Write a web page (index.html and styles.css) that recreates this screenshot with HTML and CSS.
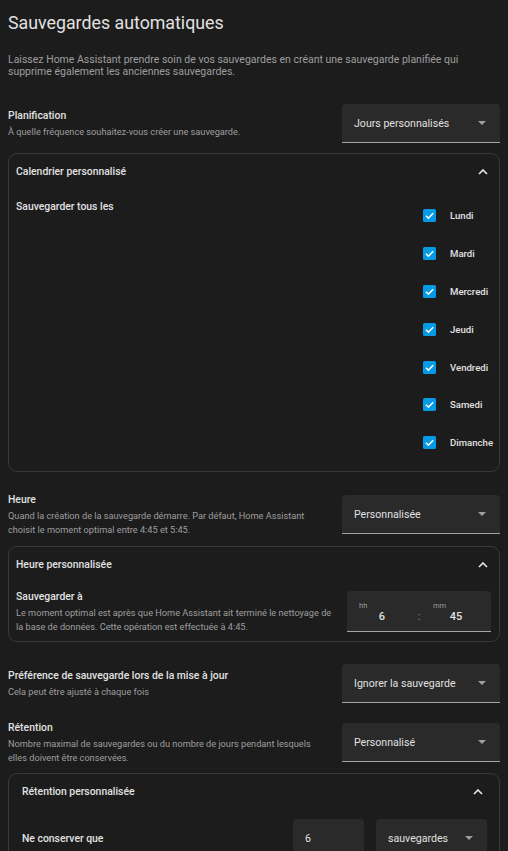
FILE: index.html
```html
<!DOCTYPE html>
<html lang="fr">
<head>
<meta charset="utf-8">
<title>Sauvegardes automatiques</title>
<link rel="stylesheet" href="styles.css">
</head>
<body>
<main class="page">
  <h1 class="title">Sauvegardes automatiques</h1>
  <p class="intro">Laissez Home Assistant prendre soin de vos sauvegardes en créant une sauvegarde planifiée qui supprime également les anciennes sauvegardes.</p>

  <div class="row row-plan">
    <div class="row-text">
      <div class="row-label">Planification</div>
      <div class="row-sub">À quelle fréquence souhaitez-vous créer une sauvegarde.</div>
    </div>
    <div class="select"><span class="select-value">Jours personnalisés</span><svg class="arrow" viewBox="0 0 8 4" width="8" height="4"><polygon points="0,0 8,0 4,4"/></svg></div>
  </div>

  <section class="card card-days">
    <header class="card-head"><span>Calendrier personnalisé</span><svg class="chevron" viewBox="0 0 10 6" width="10" height="6"><path d="M1 5 L5 1 L9 5"/></svg></header>
    <div class="days-body">
      <div class="days-label">Sauvegarder tous les</div>
      <ul class="days">
        <li class="day"><span class="check"><svg viewBox="0 0 13 13" width="13" height="13"><path d="M3 6.8 L5.4 9.2 L10.2 4.2"/></svg></span>Lundi</li>
        <li class="day"><span class="check"><svg viewBox="0 0 13 13" width="13" height="13"><path d="M3 6.8 L5.4 9.2 L10.2 4.2"/></svg></span>Mardi</li>
        <li class="day"><span class="check"><svg viewBox="0 0 13 13" width="13" height="13"><path d="M3 6.8 L5.4 9.2 L10.2 4.2"/></svg></span>Mercredi</li>
        <li class="day"><span class="check"><svg viewBox="0 0 13 13" width="13" height="13"><path d="M3 6.8 L5.4 9.2 L10.2 4.2"/></svg></span>Jeudi</li>
        <li class="day"><span class="check"><svg viewBox="0 0 13 13" width="13" height="13"><path d="M3 6.8 L5.4 9.2 L10.2 4.2"/></svg></span>Vendredi</li>
        <li class="day"><span class="check"><svg viewBox="0 0 13 13" width="13" height="13"><path d="M3 6.8 L5.4 9.2 L10.2 4.2"/></svg></span>Samedi</li>
        <li class="day"><span class="check"><svg viewBox="0 0 13 13" width="13" height="13"><path d="M3 6.8 L5.4 9.2 L10.2 4.2"/></svg></span>Dimanche</li>
      </ul>
    </div>
  </section>

  <div class="row row-time">
    <div class="row-text">
      <div class="row-label">Heure</div>
      <div class="row-sub">Quand la création de la sauvegarde démarre. Par défaut, Home Assistant choisit le moment optimal entre 4:45 et 5:45.</div>
    </div>
    <div class="select"><span class="select-value">Personnalisée</span><svg class="arrow" viewBox="0 0 8 4" width="8" height="4"><polygon points="0,0 8,0 4,4"/></svg></div>
  </div>

  <section class="card card-time">
    <header class="card-head"><span>Heure personnalisée</span><svg class="chevron" viewBox="0 0 10 6" width="10" height="6"><path d="M1 5 L5 1 L9 5"/></svg></header>
    <div class="time-body">
      <div class="time-text">
        <div class="row-label">Sauvegarder à</div>
        <div class="row-sub">Le moment optimal est après que Home Assistant ait terminé le nettoyage de la base de données. Cette opération est effectuée à 4:45.</div>
      </div>
      <div class="time-input">
        <div class="time-field"><span class="time-label">hh</span><span class="time-value">6</span></div>
        <span class="time-sep">:</span>
        <div class="time-field"><span class="time-label">mm</span><span class="time-value">45</span></div>
      </div>
    </div>
  </section>

  <div class="row row-update">
    <div class="row-text">
      <div class="row-label">Préférence de sauvegarde lors de la mise à jour</div>
      <div class="row-sub">Cela peut être ajusté à chaque fois</div>
    </div>
    <div class="select"><span class="select-value">Ignorer la sauvegarde</span><svg class="arrow" viewBox="0 0 8 4" width="8" height="4"><polygon points="0,0 8,0 4,4"/></svg></div>
  </div>

  <div class="row row-retention">
    <div class="row-text">
      <div class="row-label">Rétention</div>
      <div class="row-sub">Nombre maximal de sauvegardes ou du nombre de jours pendant lesquels elles doivent être conservées.</div>
    </div>
    <div class="select"><span class="select-value">Personnalisé</span><svg class="arrow" viewBox="0 0 8 4" width="8" height="4"><polygon points="0,0 8,0 4,4"/></svg></div>
  </div>

  <section class="card card-retention">
    <header class="card-head card-head-wide"><span>Rétention personnalisée</span><svg class="chevron" viewBox="0 0 10 6" width="10" height="6"><path d="M1 5 L5 1 L9 5"/></svg></header>
    <div class="keep-body">
      <div class="keep-label">Ne conserver que</div>
      <div class="keep-controls">
        <div class="text-field"><span class="select-value">6</span></div>
        <div class="select select-small"><span class="select-value">sauvegardes</span><svg class="arrow" viewBox="0 0 8 4" width="8" height="4"><polygon points="0,0 8,0 4,4"/></svg></div>
      </div>
    </div>
  </section>
</main>
</body>
</html>
```

FILE: styles.css
```css
* {
  box-sizing: border-box;
}

html, body {
  margin: 0;
  padding: 0;
  background: #1c1c1c;
}

body {
  font-family: Roboto, "Noto Sans", "Liberation Sans", sans-serif;
  color: #e1e1e1;
  overflow: hidden;
  height: 851px;
}

.page {
  padding: 0 8px;
}

.title {
  margin: 11px 0 0;
  font-size: 17.8px;
  line-height: 24px;
  font-weight: 400;
  color: #e1e1e1;
}

.intro {
  margin: 19px 0 0;
  font-size: 10.5px;
  line-height: 12px;
  color: #9e9e9e;
}

.row {
  display: flex;
  align-items: center;
  gap: 16px;
}

.row-plan { margin-top: 26px; }
.row-time { margin-top: 20.5px; }
.row-update { margin-top: 22px; }
.row-retention { margin-top: 17px; }

.row-text {
  flex: 1;
  min-width: 0;
}

.row-label {
  font-size: 10.4px;
  line-height: 16px;
  font-weight: 500;
  color: #e1e1e1;
}

.row-sub {
  margin-top: 1px;
  font-size: 9.2px;
  line-height: 14px;
  color: #9e9e9e;
}

.select {
  flex: none;
  width: 158px;
  height: 39px;
  background: #2a2a2a;
  border-bottom: 1px solid #a3a3a3;
  border-radius: 4px 4px 0 0;
  display: flex;
  align-items: center;
  justify-content: space-between;
  padding: 0 14px 0 12px;
}

.select-value {
  font-size: 10.6px;
  color: #e1e1e1;
  white-space: nowrap;
}

.arrow {
  fill: #9e9e9e;
  flex: none;
}

.card {
  border: 1px solid #383838;
  border-radius: 9px;
}

.card-days { margin-top: 10px; }
.card-time { margin-top: 9px; }
.card-retention { margin-top: 8px; }

.card-head {
  height: 35px;
  display: flex;
  align-items: center;
  justify-content: space-between;
  padding: 0 11px 0 7px;
  font-size: 10.4px;
  font-weight: 500;
  color: #e1e1e1;
}

.card-head-wide {
  padding: 0 16px 0 13px;
}

.chevron {
  fill: none;
  stroke: #e8e8e8;
  stroke-width: 1.6;
  flex: none;
}

.days-body {
  display: flex;
  padding: 8px 0 9px 7px;
}

.days-label {
  flex: 1;
  margin-top: 3px;
  font-size: 10.4px;
  line-height: 14px;
  font-weight: 500;
  color: #e1e1e1;
}

.days {
  list-style: none;
  margin: 0;
  padding: 0;
  width: 76px;
}

.day {
  height: 37.8px;
  display: flex;
  align-items: center;
  gap: 14px;
  font-size: 9.6px;
  font-weight: 500;
  color: #e1e1e1;
  white-space: nowrap;
}

.check {
  width: 13px;
  height: 13px;
  flex: none;
  background: #039be5;
  border-radius: 1.5px;
  display: flex;
}

.check svg {
  fill: none;
  stroke: #ffffff;
  stroke-width: 1.6;
}

.time-body {
  display: flex;
  align-items: center;
  gap: 8px;
  padding: 7px 8px 7px 7px;
}

.time-text {
  flex: 1;
  min-width: 0;
}

.time-input {
  flex: none;
  width: 144px;
  height: 41px;
  background: #2a2a2a;
  border-bottom: 1px solid #a3a3a3;
  border-radius: 4px 4px 0 0;
  display: flex;
  align-items: stretch;
}

.time-field {
  width: 70px;
  display: flex;
  flex-direction: column;
  padding: 10px 0 0 12px;
}

.time-label {
  font-size: 7.5px;
  line-height: 9px;
  color: #9e9e9e;
}

.time-value {
  margin-left: -12px;
  text-align: center;
  font-size: 11px;
  line-height: 14px;
  font-weight: 500;
  color: #e1e1e1;
}

.time-sep {
  width: 4px;
  text-align: center;
  font-size: 10px;
  color: #9e9e9e;
  padding-top: 20px;
}

.keep-body {
  display: flex;
  align-items: flex-start;
  padding: 10px 12px 0 13px;
}

.keep-label {
  flex: 1;
  padding-top: 13px;
  font-size: 10.4px;
  line-height: 14px;
  font-weight: 500;
  color: #e1e1e1;
}

.keep-controls {
  display: flex;
  gap: 12px;
}

.text-field {
  width: 71px;
  height: 39px;
  background: #2a2a2a;
  border-radius: 4px 4px 0 0;
  display: flex;
  align-items: center;
  padding: 0 12px;
}

.select-small {
  width: 111px;
}
```
